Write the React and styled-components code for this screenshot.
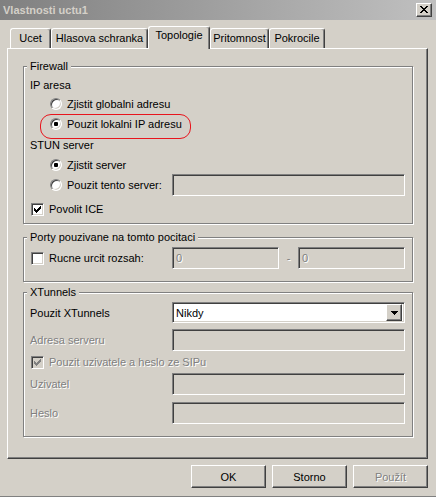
import React from 'react';
import styled, { createGlobalStyle } from 'styled-components';

const GlobalStyle = createGlobalStyle`
  html, body {
    margin: 0;
    padding: 0;
    background: #d4d0c8;
  }
  body {
    font-family: "Liberation Sans", Arial, sans-serif;
    font-size: 11px;
    color: #000;
  }
  * {
    box-sizing: border-box;
  }
`;

const CHECK = ['......#', '.....##', '#...###', '##.###.', '#####..', '.###...', '..#....'];
const CROSS = ['##....##', '.##..##.', '..####..', '...##...', '..####..', '.##..##.', '##....##'];
const ARROW = ['#######', '.#####.', '..###..', '...#...'];

// small pixel glyphs (check mark, close cross, combo arrow)
const Pixels = ({ rows, color = '#000' }) => (
  <svg width={rows[0].length} height={rows.length} shapeRendering="crispEdges">
    {rows.flatMap((r, y) =>
      [...r].map((c, x) =>
        c === '#' ? <rect key={`${x}-${y}`} x={x} y={y} width="1" height="1" fill={color} /> : null
      )
    )}
  </svg>
);

const Dialog = () => {
  const tabs = [
    { label: 'Ucet', w: 41 },
    { label: 'Hlasova schranka', w: 97 },
    { label: 'Topologie', w: 62, active: true },
    { label: 'Pritomnost', w: 59 },
    { label: 'Pokrocile', w: 56 },
  ];

  return (
    <Window>
      <TitleBar>
        <Title>Vlastnosti uctu1</Title>
        <CloseButton>
          <Pixels rows={CROSS} />
        </CloseButton>
      </TitleBar>

      <TabStrip>
        {tabs.map((t) => (
          <Tab key={t.label} $w={t.w} $active={t.active}>
            {t.label}
          </Tab>
        ))}
      </TabStrip>

      <Panel>
        <Group $h={158}>
          <GroupLabel>Firewall</GroupLabel>
          <Row $h={19} $mt={8}>IP aresa</Row>
          <Row $h={20} $indent={20}>
            <Radio />
            <OptionText>Zjistit globalni adresu</OptionText>
          </Row>
          <Row $h={20} $indent={20}>
            <Marked>
              <Radio $checked />
              <OptionText>Pouzit lokalni IP adresu</OptionText>
            </Marked>
          </Row>
          <Row $h={21}>STUN server</Row>
          <Row $h={19} $indent={20}>
            <Radio $checked />
            <OptionText>Zjistit server</OptionText>
          </Row>
          <Row $h={22} $indent={20}>
            <Radio />
            <OptionText>Pouzit tento server:</OptionText>
            <Field $w={233} />
          </Row>
          <Row $h={20} $mt={3} $indent={1}>
            <Checkbox $checked />
            <OptionText $gap={5}>Povolit ICE</OptionText>
          </Row>
        </Group>

        <Group $h={45} $mt={13}>
          <GroupLabel>Porty pouzivane na tomto pocitaci</GroupLabel>
          <Row $h={22} $mt={9} $indent={1}>
            <Checkbox />
            <OptionText $gap={5}>Rucne urcit rozsah:</OptionText>
            <Field $w={107}>
              <Muted>0</Muted>
            </Field>
            <Dash>-</Dash>
            <Field $w={107} $auto={false}>
              <Muted>0</Muted>
            </Field>
          </Row>
        </Group>

        <Group $h={145} $mt={10}>
          <GroupLabel>XTunnels</GroupLabel>
          <Row $h={21} $mt={9}>
            Pouzit XTunnels
            <Field $w={233} $white>
              <ComboText>Nikdy</ComboText>
              <DropButton>
                <Pixels rows={ARROW} />
              </DropButton>
            </Field>
          </Row>
          <Row $h={22} $mt={6}>
            <Muted>Adresa serveru</Muted>
            <Field $w={233} />
          </Row>
          <Row $h={22} $indent={1}>
            <Checkbox $checked $disabled />
            <OptionText $gap={5}>
              <Muted>Pouzit uzivatele a heslo ze SIPu</Muted>
            </OptionText>
          </Row>
          <Row $h={22}>
            <Muted>Uzivatel</Muted>
            <Field $w={233} />
          </Row>
          <Row $h={22} $mt={7}>
            <Muted>Heslo</Muted>
            <Field $w={233} />
          </Row>
        </Group>
      </Panel>

      <ButtonRow>
        <Button>OK</Button>
        <Button>Storno</Button>
        <Button>
          <Muted>Použít</Muted>
        </Button>
      </ButtonRow>
    </Window>
  );
};

const Window = styled.div`
  width: 436px;
  height: 497px;
  background: #d4d0c8;
  border-bottom: 1px solid #808080;
  display: flex;
  flex-direction: column;
  overflow: hidden;
`;

const TitleBar = styled.div`
  height: 20px;
  background: linear-gradient(to right, #808080, #c0c0c0);
  display: flex;
  align-items: center;
  justify-content: space-between;
  padding: 0 4px 1px 3px;
`;

const Title = styled.span`
  color: #d4d0c8;
  font-weight: bold;
  font-size: 11px;
`;

const raised = `
  background: #d4d0c8;
  border: 1px solid;
  border-color: #fff #404040 #404040 #fff;
  box-shadow: inset -1px -1px 0 #808080;
`;

const sunken = `
  border: 1px solid;
  border-color: #808080 #fff #fff #808080;
  box-shadow: inset 1px 1px 0 #404040, inset -1px -1px 0 #d4d0c8;
`;

const CloseButton = styled.div`
  ${raised}
  width: 16px;
  height: 14px;
  display: flex;
  align-items: center;
  justify-content: center;
  padding-right: 1px;
`;

const TabStrip = styled.div`
  margin-top: 6px;
  height: 22px;
  padding-left: 10px;
  display: flex;
  align-items: flex-end;
`;

const Tab = styled.div`
  width: ${(p) => p.$w}px;
  height: ${(p) => (p.$active ? 23 : 20)}px;
  margin-bottom: ${(p) => (p.$active ? -1 : 0)}px;
  position: relative;
  z-index: ${(p) => (p.$active ? 1 : 0)};
  background: #d4d0c8;
  border-top: 1px solid #fff;
  border-left: 1px solid #fff;
  border-right: 1px solid #404040;
  box-shadow: inset -1px 0 0 #808080;
  border-radius: 3px 3px 0 0;
  text-align: center;
  line-height: ${(p) => (p.$active ? 17 : 18)}px;
  white-space: nowrap;
`;

const Panel = styled.div`
  margin-left: 7px;
  width: 421px;
  height: 411px;
  border: 1px solid;
  border-color: #fff #404040 #404040 #fff;
  box-shadow: inset -1px -1px 0 #808080;
  padding: 17px 14px 0 15px;
  display: flex;
  flex-direction: column;
`;

const Group = styled.div`
  position: relative;
  height: ${(p) => p.$h}px;
  margin-top: ${(p) => p.$mt || 0}px;
  border: 1px solid #808080;
  box-shadow: 1px 1px 0 #fff, inset 1px 1px 0 #fff;
  padding: 0 7px 0 6px;
  display: flex;
  flex-direction: column;
`;

const GroupLabel = styled.span`
  position: absolute;
  top: -7px;
  left: 3px;
  padding: 0 3px;
  line-height: 13px;
  background: #d4d0c8;
`;

const Row = styled.div`
  height: ${(p) => p.$h}px;
  margin-top: ${(p) => p.$mt || 0}px;
  padding-left: ${(p) => p.$indent || 0}px;
  display: flex;
  align-items: center;
  white-space: nowrap;
`;

const Marked = styled.div`
  position: relative;
  display: flex;
  align-items: center;

  &::after {
    content: '';
    position: absolute;
    left: -10px;
    top: -4px;
    width: 149px;
    height: 23px;
    border: 1px solid #e8141c;
    border-radius: 11px;
  }
`;

const Radio = styled.span`
  width: 12px;
  height: 12px;
  flex: none;
  border-radius: 50%;
  background: #fff;
  border: 1px solid;
  border-color: #808080 #fff #fff #808080;
  box-shadow: inset 1px 1px 0 #404040, inset -1px -1px 0 #d4d0c8;
  display: flex;
  align-items: center;
  justify-content: center;

  &::after {
    content: '';
    width: 4px;
    height: 4px;
    border-radius: 1px;
    background: ${(p) => (p.$checked ? '#000' : 'transparent')};
  }
`;

const CheckboxBox = styled.span`
  ${sunken}
  width: 13px;
  height: 13px;
  flex: none;
  background: ${(p) => (p.$disabled ? '#d4d0c8' : '#fff')};
  display: flex;
  align-items: center;
  justify-content: center;
`;

const Checkbox = ({ $checked, $disabled }) => (
  <CheckboxBox $disabled={$disabled}>
    {$checked && <Pixels rows={CHECK} color={$disabled ? '#808080' : '#000'} />}
  </CheckboxBox>
);

const OptionText = styled.span`
  margin-left: ${(p) => p.$gap || 5}px;
`;

const Field = styled.div`
  ${sunken}
  width: ${(p) => p.$w}px;
  height: 100%;
  margin-left: ${(p) => (p.$auto === false ? 0 : 'auto')};
  background: ${(p) => (p.$white ? '#fff' : '#d4d0c8')};
  display: flex;
  align-items: center;
  padding: 2px 2px 2px 3px;
`;

const ComboText = styled.span`
  flex: 1;
  padding-left: 0;
`;

const DropButton = styled.div`
  ${raised}
  width: 16px;
  height: 17px;
  display: flex;
  align-items: center;
  justify-content: center;
  padding-top: 1px;
`;

const Muted = styled.span`
  color: #808080;
  text-shadow: 1px 1px 0 #fff;
`;

const Dash = styled(Muted)`
  width: 19px;
  text-align: center;
`;

const ButtonRow = styled.div`
  margin-top: 6px;
  padding-right: 8px;
  display: flex;
  justify-content: flex-end;
  gap: 6px;
`;

const Button = styled.div`
  ${raised}
  width: 75px;
  height: 23px;
  display: flex;
  align-items: center;
  justify-content: center;
`;

export default function App() {
  return (
    <>
      <GlobalStyle />
      <Dialog />
    </>
  );
}
